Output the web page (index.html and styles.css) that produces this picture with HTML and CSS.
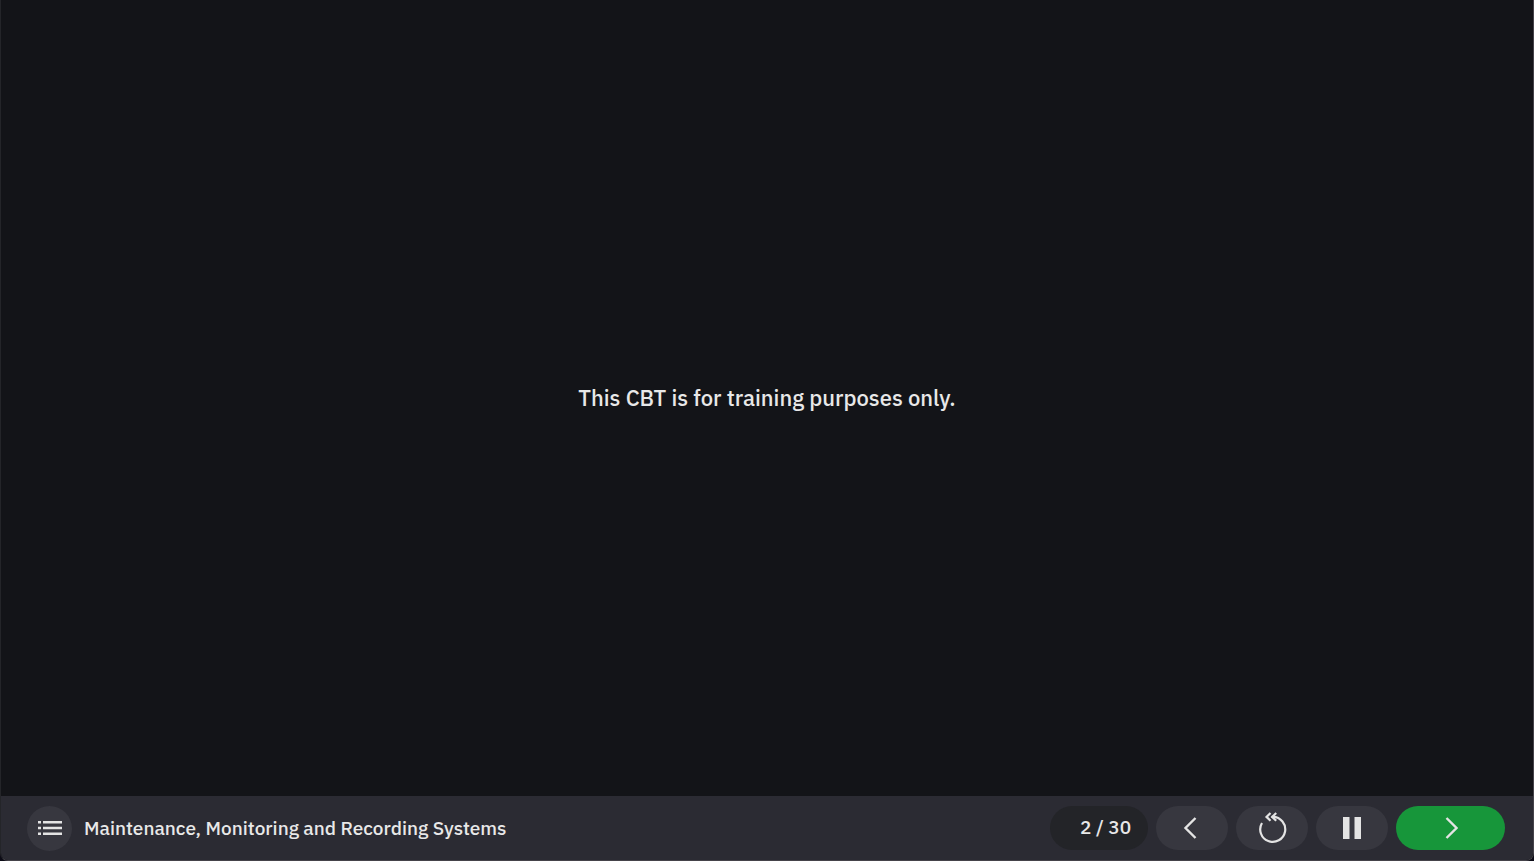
FILE: index.html
```html
<!DOCTYPE html>
<html lang="en">
<head>
  <meta charset="UTF-8" />
  <meta name="viewport" content="width=device-width, initial-scale=1.0" />
  <title>Maintenance, Monitoring and Recording Systems</title>
  <link rel="stylesheet" href="styles.css">
</head>
<body>

  <div class="player">
    <main class="slide">
      <p class="slide-text">This CBT is for training purposes only.</p>
    </main>

    <footer class="bar">
      <button class="menu-btn" type="button" aria-label="Menu">
        <svg width="24" height="14" viewBox="0 0 24 14" fill="currentColor">
          <path d="M0 0h3v2.500H0zM5 0h19v2.500H5zM0 5.800h3v2.400H0zM5 5.800h19v2.400H5zM0 11.500h3V14H0zM5 11.500h19V14H5z" />
        </svg>
      </button>
      <h1 class="title">Maintenance, Monitoring and Recording Systems</h1>

      <div class="controls">
        <div class="counter">2 / 30</div>
        <button class="btn" type="button" aria-label="Previous">
          <svg class="prev-icon" width="14" height="24" viewBox="0 0 14 24" fill="none" stroke="currentColor" stroke-width="2.400">
            <path d="M12.500 2L2.500 12l10 10" />
          </svg>
        </button>
        <button class="btn" type="button" aria-label="Replay">
          <svg width="30" height="32" viewBox="0 0 30 32" fill="none" stroke="currentColor" stroke-width="2.200">
            <path d="M5 11A12.500 12.500 0 1 0 16 4.900H14.500" />
            <path d="M13.500 1L9.500 4.900l4 3.900M19.200 1L15.200 4.900l4 3.900" />
          </svg>
        </button>
        <button class="btn" type="button" aria-label="Pause">
          <svg width="18" height="22" viewBox="0 0 18 22" fill="currentColor">
            <path d="M0 0h6.500v22H0zM11.500 0H18v22h-6.500z" />
          </svg>
        </button>
        <button class="btn btn-next" type="button" aria-label="Next">
          <svg width="14" height="24" viewBox="0 0 14 24" fill="none" stroke="currentColor" stroke-width="2.400">
            <path d="M2.500 2l10 10-10 10" />
          </svg>
        </button>
      </div>
    </footer>
  </div>

</body>
</html>
```
FILE: styles.css
```css
* {
  box-sizing: border-box;
}

body {
  margin: 0;
  background: #0c0b16;
  color: #e8e8e8;
  font-family: "IBM Plex Sans", Roboto, sans-serif;
  font-weight: 500;
}

.player {
  display: flex;
  flex-direction: column;
  min-height: 100vh;
  background: #131418;
  border: 1px solid #45434a;
  border-top: none;
  border-left-color: #242529;
  border-radius: 0 0 8px 8px;
  overflow: hidden;
}

.slide {
  flex: 1;
  display: flex;
  align-items: center;
  justify-content: center;
}

.slide-text {
  margin: 0;
  font-size: 22px;
  line-height: 32px;
}

.bar {
  display: flex;
  align-items: center;
  gap: 12px;
  height: 64px;
  padding: 0 28px 0 26px;
  background: #2b2b33;
}

button {
  display: flex;
  align-items: center;
  justify-content: center;
  padding: 0;
  border: none;
  background: #37373f;
  color: #e4e4e4;
  cursor: pointer;
}

.menu-btn {
  width: 45px;
  height: 45px;
  border-radius: 50%;
}

.title {
  margin: 0;
  font-size: 19px;
  font-weight: 500;
  line-height: 28px;
}

.controls {
  display: flex;
  gap: 8px;
  margin-left: auto;
}

.counter {
  width: 98px;
  height: 44px;
  padding: 0 17px 0 30px;
  border-radius: 22px;
  background: #232428;
  font-size: 19px;
  line-height: 42px;
  text-align: right;
  white-space: nowrap;
}

.btn {
  width: 72px;
  height: 44px;
  border-radius: 22px;
}

.prev-icon {
  margin-right: 4px;
}

.btn-next {
  width: 109px;
  background: #17963a;
}
```
